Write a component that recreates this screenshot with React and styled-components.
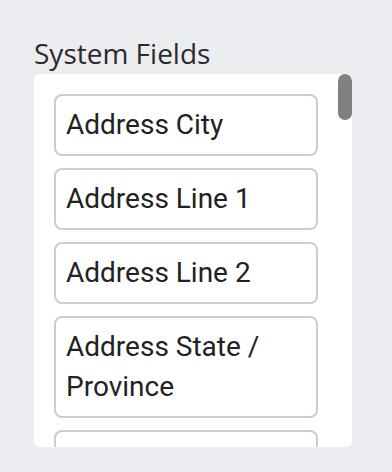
import React from "react";
import styled, { createGlobalStyle } from "styled-components";

const Global = createGlobalStyle`
  html, body {
    margin: 0;
    padding: 0;
    background: #ecedf1;
    overflow: hidden;
  }
  * { box-sizing: border-box; }
`;

const Page = styled.div`
  width: 392px;
  height: 472px;
  padding: 34px 0 0 34px;
  display: flex;
  flex-direction: column;
`;

const Title = styled.h2`
  margin: 0;
  font-family: "Open Sans", "Noto Sans", sans-serif;
  font-weight: 400;
  font-size: 28px;
  line-height: 38px;
  color: #2b2b2b;
`;

const Panel = styled.div`
  position: relative;
  margin-top: 2px;
  width: 318px;
  height: 373px;
  background: #ffffff;
  border-radius: 6px;
  overflow: hidden;
  padding: 20px 34px 0 20px;
`;

const List = styled.div`
  display: flex;
  flex-direction: column;
  gap: 12px;
`;

const Thumb = styled.div`
  position: absolute;
  top: 0;
  right: 0;
  width: 14px;
  height: 46px;
  border-radius: 7px;
  background: #808080;
`;

const Field = styled.div`
  flex: none;
  border: 2px solid #cdcdcd;
  border-radius: 8px;
  padding: 9px 10px;
  font-family: Roboto, "Liberation Sans", sans-serif;
  font-size: 28px;
  line-height: 40px;
  color: #222222;
  background: #fff;
`;

const fields = [
  "Address City",
  "Address Line 1",
  "Address Line 2",
  "Address State / Province",
  "Address Zip",
];

export default function App() {
  return (
    <>
      <Global />
      <Page>
        <Title>System Fields</Title>
        <Panel>
          <List>
            {fields.map((f) => (
              <Field key={f}>{f}</Field>
            ))}
          </List>
          <Thumb />
        </Panel>
      </Page>
    </>
  );
}
